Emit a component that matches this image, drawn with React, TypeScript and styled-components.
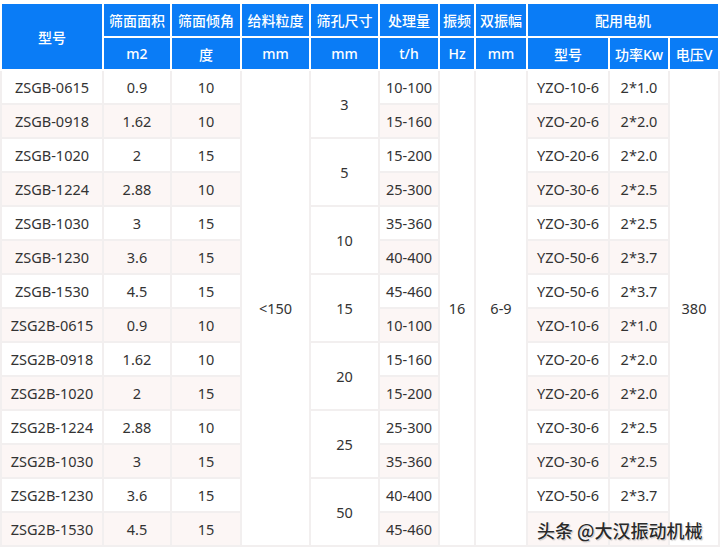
import React from "react";
import styled, { createGlobalStyle } from "styled-components";

type Row = {
  model: string;
  area: string;
  angle: string;
  capacity: string;
  motor: string;
  power: string;
};

const rows: Row[] = [
  { model: "ZSGB-0615", area: "0.9", angle: "10", capacity: "10-100", motor: "YZO-10-6", power: "2*1.0" },
  { model: "ZSGB-0918", area: "1.62", angle: "10", capacity: "15-160", motor: "YZO-20-6", power: "2*2.0" },
  { model: "ZSGB-1020", area: "2", angle: "15", capacity: "15-200", motor: "YZO-20-6", power: "2*2.0" },
  { model: "ZSGB-1224", area: "2.88", angle: "10", capacity: "25-300", motor: "YZO-30-6", power: "2*2.5" },
  { model: "ZSGB-1030", area: "3", angle: "15", capacity: "35-360", motor: "YZO-30-6", power: "2*2.5" },
  { model: "ZSGB-1230", area: "3.6", angle: "15", capacity: "40-400", motor: "YZO-50-6", power: "2*3.7" },
  { model: "ZSGB-1530", area: "4.5", angle: "15", capacity: "45-460", motor: "YZO-50-6", power: "2*3.7" },
  { model: "ZSG2B-0615", area: "0.9", angle: "10", capacity: "10-100", motor: "YZO-10-6", power: "2*1.0" },
  { model: "ZSG2B-0918", area: "1.62", angle: "10", capacity: "15-160", motor: "YZO-20-6", power: "2*2.0" },
  { model: "ZSG2B-1020", area: "2", angle: "15", capacity: "15-200", motor: "YZO-20-6", power: "2*2.0" },
  { model: "ZSG2B-1224", area: "2.88", angle: "10", capacity: "25-300", motor: "YZO-30-6", power: "2*2.5" },
  { model: "ZSG2B-1030", area: "3", angle: "15", capacity: "35-360", motor: "YZO-30-6", power: "2*2.5" },
  { model: "ZSG2B-1230", area: "3.6", angle: "15", capacity: "40-400", motor: "YZO-50-6", power: "2*3.7" },
  // last motor cells are hidden under the watermark
  { model: "ZSG2B-1530", area: "4.5", angle: "15", capacity: "45-460", motor: "", power: "" },
];

const apertures = ["3", "5", "10", "15", "20", "25", "50"];

const widths = [104, 68, 70, 69, 69, 60, 36, 52, 82, 60, 50];

const SpecTable = () => {
  return (
    <Wrapper>
      <GlobalStyle />
      <Table>
        <colgroup>
          {widths.map((w, i) => (
            <col key={i} style={{ width: w }} />
          ))}
        </colgroup>
        <thead>
          <HeadRow $h={34}>
            <Th rowSpan={2} $first>
              型号
            </Th>
            <Th>筛面面积</Th>
            <Th>筛面倾角</Th>
            <Th>给料粒度</Th>
            <Th>筛孔尺寸</Th>
            <Th>处理量</Th>
            <Th>振频</Th>
            <Th>双振幅</Th>
            <Th colSpan={3}>配用电机</Th>
          </HeadRow>
          <HeadRow $h={33}>
            <Th>m2</Th>
            <Th>度</Th>
            <Th>mm</Th>
            <Th>mm</Th>
            <Th>t/h</Th>
            <Th>Hz</Th>
            <Th>mm</Th>
            <Th>型号</Th>
            <Th>功率Kw</Th>
            <Th>电压V</Th>
          </HeadRow>
        </thead>
        <tbody>
          {rows.map((r, i) => {
            const alt = i % 2 === 1;
            return (
              <tr key={r.model}>
                <Td $alt={alt} $first>
                  {r.model}
                </Td>
                <Td $alt={alt}>{r.area}</Td>
                <Td $alt={alt}>{r.angle}</Td>
                {i === 0 && <Td rowSpan={rows.length}>&lt;150</Td>}
                {i % 2 === 0 && <Td rowSpan={2}>{apertures[i / 2]}</Td>}
                <Td $alt={alt}>{r.capacity}</Td>
                {i === 0 && (
                  <>
                    <Td rowSpan={rows.length}>16</Td>
                    <Td rowSpan={rows.length}>6-9</Td>
                  </>
                )}
                <Td $alt={alt}>{r.motor}</Td>
                <Td $alt={alt}>{r.power}</Td>
                {i === 0 && <Td rowSpan={rows.length}>380</Td>}
              </tr>
            );
          })}
        </tbody>
      </Table>
      <Watermark>头条 @大汉振动机械</Watermark>
    </Wrapper>
  );
};

const GlobalStyle = createGlobalStyle`
  body {
    margin: 0;
    background: #ffffff;
  }
  * {
    box-sizing: border-box;
  }
`;

const Wrapper = styled.div`
  position: relative;
  width: 720px;
  padding-top: 4px;
  font-family: "Noto Sans", "Noto Sans CJK SC", sans-serif;
`;

const Table = styled.table`
  width: 720px;
  table-layout: fixed;
  border-collapse: separate;
  border-spacing: 0;
  font-size: 14.5px;
`;

const HeadRow = styled.tr<{ $h: number }>`
  height: ${(p) => p.$h}px;
`;

const Th = styled.th<{ $first?: boolean }>`
  background: #0a7cf6;
  color: #ffffff;
  font-family: "Noto Sans", "Noto Sans CJK SC", sans-serif;
  font-weight: 500;
  font-size: 14px;
  text-align: center;
  vertical-align: middle;
  padding: 0;
  white-space: nowrap;
  border-right: 2px solid #ffffff;
  border-bottom: 2px solid #ffffff;
  border-left: ${(p) => (p.$first ? "2px solid #ffffff" : "none")};
`;

const Td = styled.td<{ $alt?: boolean; $first?: boolean }>`
  height: 34px;
  padding: 0;
  text-align: center;
  vertical-align: middle;
  white-space: nowrap;
  color: #333333;
  background: ${(p) => (p.$alt ? "#fcf6f5" : "#ffffff")};
  border-right: 2px solid #f2efef;
  border-bottom: 2px solid #f2efef;
  border-left: ${(p) => (p.$first ? "2px solid #f2efef" : "none")};
`;

const Watermark = styled.div`
  position: absolute;
  left: 537px;
  top: 517px;
  font-family: "Noto Sans CJK SC", sans-serif;
  font-size: 18px;
  font-weight: 500;
  color: #2a2a2a;
  white-space: nowrap;
  text-shadow: 0 0 2px #ffffff, 0 0 2px #ffffff, 1px 1px 1px rgba(0, 0, 0, 0.3);
`;

export default SpecTable;
